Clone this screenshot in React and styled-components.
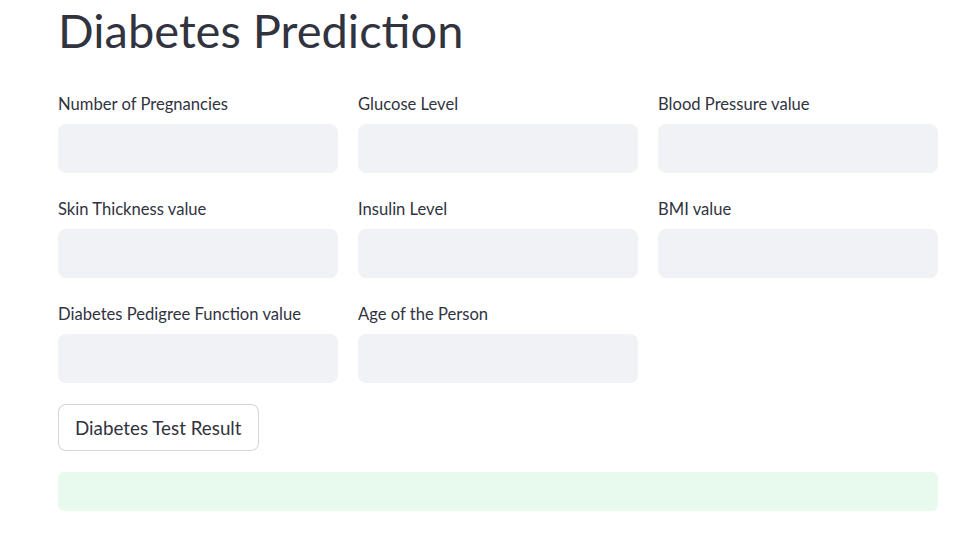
import React from "react";
import styled, { createGlobalStyle } from "styled-components";

const Global = createGlobalStyle`
  html, body { margin: 0; padding: 0; background: #ffffff; }
  body { font-family: Lato, "Noto Sans", sans-serif; color: #31333f; }
  * { box-sizing: border-box; }
`;

const Main = styled.main`
  width: 958px;
  padding: 0 20px 0 58px;
`;

const Title = styled.h1`
  margin: 0;
  padding: 1px 0 0;
  font-size: 47px;
  font-weight: 400;
  line-height: 59px;
  color: #31333f;
`;

const Grid = styled.div`
  display: grid;
  grid-template-columns: repeat(3, 280px);
  column-gap: 20px;
  row-gap: 24px;
  margin-top: 32px;
`;

const Field = styled.div`
  display: flex;
  flex-direction: column;
  gap: 8px;
`;

const Label = styled.label`
  font-size: 16.6px;
  line-height: 24px;
  color: #31333f;
`;

const Input = styled.div`
  height: 49px;
  border-radius: 8px;
  background: #f0f2f6;
`;

const Button = styled.button`
  margin-top: 21px;
  height: 47px;
  padding: 0 16px;
  border: 1px solid rgba(49, 51, 63, 0.2);
  border-radius: 8px;
  background: #ffffff;
  font-family: Lato, "Noto Sans", sans-serif;
  font-size: 18.8px;
  color: #31333f;
`;

const Alert = styled.div`
  margin-top: 21px;
  height: 39px;
  border-radius: 6px;
  background: #e8f9ee;
`;

const fields = [
  "Number of Pregnancies",
  "Glucose Level",
  "Blood Pressure value",
  "Skin Thickness value",
  "Insulin Level",
  "BMI value",
  "Diabetes Pedigree Function value",
  "Age of the Person",
];

export default function App() {
  return (
    <>
      <Global />
      <Main>
        <Title>Diabetes Prediction</Title>
        <Grid>
          {fields.map((f) => (
            <Field key={f}>
              <Label>{f}</Label>
              <Input />
            </Field>
          ))}
        </Grid>
        <Button>Diabetes Test Result</Button>
        <Alert />
      </Main>
    </>
  );
}
